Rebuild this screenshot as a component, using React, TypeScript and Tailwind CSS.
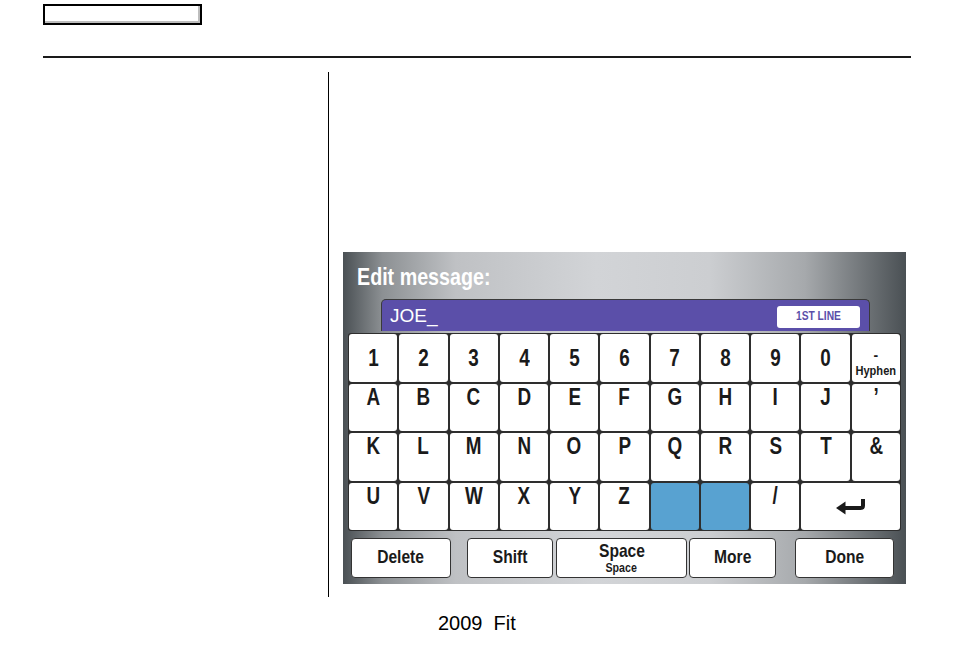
import type { ReactNode } from 'react';

// No condensed face installed, so the nav screen labels are squeezed horizontally
const sans = { fontFamily: '"Liberation Sans", Arial, sans-serif' };

const N = ({ children, className = '' }: { children: ReactNode; className?: string }) => (
    <span className={`inline-block scale-x-[0.82] whitespace-nowrap ${className}`}>{children}</span>
);

type KeyDef = { label?: string; sub?: string; blue?: boolean; enter?: boolean; top?: boolean };

const rows: KeyDef[][] = [
    [...'1234567890'.split('').map((c) => ({ label: c })), { label: '-', sub: 'Hyphen' }],
    [...'ABCDEFGHIJ'.split('').map((c) => ({ label: c, top: true })), { label: '’', top: true }],
    [...'KLMNOPQRST'.split('').map((c) => ({ label: c, top: true })), { label: '&', top: true }],
    [
        ...'UVWXYZ'.split('').map((c) => ({ label: c, top: true })),
        { blue: true },
        { blue: true },
        { label: '/', top: true },
        { enter: true },
    ],
];

const EnterIcon = () => (
    <svg width="30" height="17" viewBox="0 0 30 17" fill="none">
        <path d="M27 0 V6.5 Q27 9 24.5 9 H8" stroke="#1a1a1a" strokeWidth="4" />
        <path d="M0 9 L9.5 2.5 L9.5 15.5 Z" fill="#1a1a1a" />
    </svg>
);

function Key({ k }: { k: KeyDef }) {
    if (k.blue) return <div className="bg-[#58a2d1] rounded-[3px]" />;
    if (k.enter)
        return (
            <div className="col-span-2 bg-white rounded-[3px] flex items-center justify-center pt-[3px]">
                <EnterIcon />
            </div>
        );
    if (k.sub)
        return (
            <div className="bg-white rounded-[3px] flex flex-col items-center justify-start pt-[13px] text-[#1a1a1a] font-black">
                <span className="text-[14px] leading-[16px]">{k.label}</span>
                <N className="text-[13.5px] leading-[15px] font-bold">{k.sub}</N>
            </div>
        );
    return (
        <div
            className={`bg-white rounded-[3px] flex justify-center text-[#1a1a1a] font-bold text-[23px] leading-[24px] ${k.top ? 'items-start pt-[1px]' : 'items-center'}`}
        >
            <N>{k.label}</N>
        </div>
    );
}

function Btn({ w, children, className = '' }: { w: string; children: ReactNode; className?: string }) {
    return (
        <div
            className={`${w} h-[40px] bg-white border-[1.5px] border-[#333] rounded-[4px] flex flex-col items-center justify-center text-[#1a1a1a] font-bold ${className}`}
        >
            {children}
        </div>
    );
}

function Screen() {
    return (
        <div className="w-[563px] h-[332px] flex flex-col bg-[linear-gradient(to_right,#4a5054_0%,#8c9093_7%,#bfc1c4_20%,#d2d4d7_45%,#ccced1_65%,#a6a9ac_82%,#4a5054_100%)]">
            <div className="pl-[14px] pt-[11px] h-[47px] text-white font-bold text-[24px] leading-[28px]">
                <N className="origin-left">Edit message:</N>
            </div>
            <div className="ml-[38px] mr-[36px] h-[32px] bg-[#5b4fa9] border-[1.5px] border-b-0 border-[#3a3a3a] rounded-t-[5px] flex items-center justify-between pl-[8px] pr-[9px]">
                <span className="text-white text-[19px] leading-none">JOE_</span>
                <span className="bg-white rounded-[3px] w-[83px] h-[22px] flex items-center justify-center text-[#5b4fa9] font-bold text-[12.5px] mt-[2px]">
                    <N>1ST LINE</N>
                </span>
            </div>
            <div className="mx-[5px] mt-[2px] h-[198px] grid grid-cols-11 grid-rows-4 gap-[2px] p-[1px] bg-[#2e2e2e] rounded-[3px]">
                {rows.map((r, i) => r.map((k, j) => <Key key={`${i}-${j}`} k={k} />))}
            </div>
            <div className="flex mt-[7px] pl-[8px]">
                <Btn w="w-[100px]" className="text-[19px] pb-[2px]"><N>Delete</N></Btn>
                <Btn w="w-[86px] ml-[16px]" className="text-[19px] pb-[2px]"><N>Shift</N></Btn>
                <Btn w="w-[131px] ml-[3px]">
                    <N className="text-[19px] leading-[20px]">Space</N>
                    <N className="text-[13px] leading-[14px]">Space</N>
                </Btn>
                <Btn w="w-[87px] ml-[2px]" className="text-[19px] pb-[2px]"><N>More</N></Btn>
                <Btn w="w-[99px] ml-[19px]" className="text-[19px] pb-[2px]"><N>Done</N></Btn>
            </div>
        </div>
    );
}

export default function App() {
    return (
        <div className="w-[954px] h-[652px] bg-white relative overflow-hidden" style={sans}>
            {/* header tab */}
            <div className="pt-[4px] pl-[43px]">
                <div className="w-[159px] h-[21px] border-2 border-black shadow-[inset_-2px_-2px_0_#bdbdbd]" />
            </div>
            <div className="ml-[43px] mt-[31px] w-[868px] h-[2px] bg-[#1a1a1a]" />

            <div className="flex mt-[14px]">
                <div className="w-[329px] h-[525px] border-r border-black" />
                <div className="pl-[14px] pt-[180px]">
                    <Screen />
                </div>
            </div>

            <div className="pl-[438px] mt-[14px] text-[20px] leading-[24px] text-black whitespace-pre">2009  Fit</div>
        </div>
    );
}
